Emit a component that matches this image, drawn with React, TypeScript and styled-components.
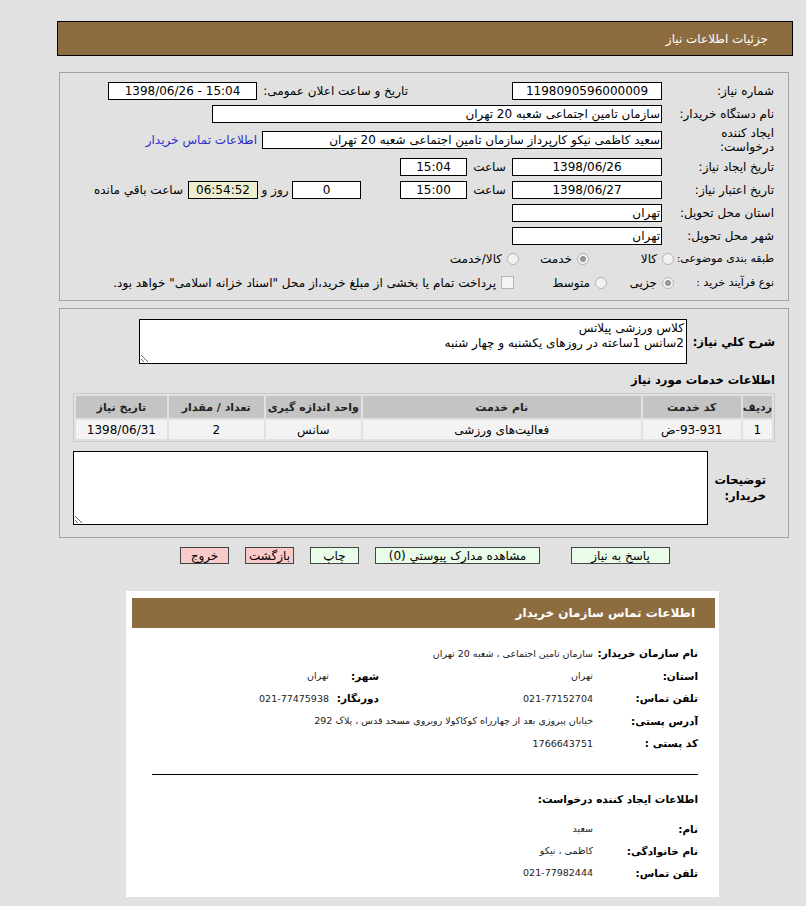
import React from 'react'
import styled, { createGlobalStyle } from 'styled-components'

const GlobalStyle = createGlobalStyle`
  html, body {
    margin: 0;
    padding: 0;
    background: #e1e1e1;
  }
  body {
    font-family: "DejaVu Sans", Tahoma, sans-serif;
    font-size: 12px;
    color: #000;
  }
`

const Page = styled.div`
  direction: rtl;
  width: 736px;
  margin-left: 57px;
  padding-top: 21px;
  padding-bottom: 10px;
`

const TitleBar = styled.div`
  height: 35px;
  box-sizing: border-box;
  border: 1px solid #000;
  background: #8d6c3f;
  color: #fff;
  display: flex;
  align-items: center;
  padding-right: 24px;
  font-size: 12px;
`

const Panel = styled.div<{ $top: number; $height: number }>`
  margin: ${p => p.$top}px 4px 0 2px;
  height: ${p => p.$height}px;
  box-sizing: border-box;
  border: 1px solid #a3a3a3;
`

const FormArea = styled.div`
  padding: 7px 14px 0 0;
`

const Row = styled.div<{ $h: number }>`
  display: flex;
  align-items: center;
  height: ${p => p.$h}px;
`

const Label = styled.div<{ $w?: number; $size?: number }>`
  width: ${p => p.$w ?? 112}px;
  flex-shrink: 0;
  white-space: nowrap;
  font-size: ${p => p.$size ?? 12}px;
  line-height: 14px;
`

const Field = styled.div<{ $w: number; $center?: boolean; $bg?: string }>`
  width: ${p => p.$w}px;
  height: 18px;
  box-sizing: border-box;
  flex-shrink: 0;
  border: 1px solid #000;
  background: ${p => p.$bg ?? '#fff'};
  display: flex;
  align-items: center;
  justify-content: ${p => (p.$center ? 'center' : 'flex-start')};
  padding: 0 1px;
  white-space: nowrap;
  overflow: hidden;
`

const Slot = styled.div<{ $w: number; $center?: boolean }>`
  width: ${p => p.$w}px;
  flex-shrink: 0;
  text-align: ${p => (p.$center ? 'center' : 'right')};
  white-space: nowrap;
`

const Gap = styled.div<{ $w: number }>`
  width: ${p => p.$w}px;
  flex-shrink: 0;
`

const Note = styled.div`
  margin-right: 5px;
  white-space: nowrap;
`

const BlueLink = styled.a`
  margin-right: 5px;
  color: #2f2fc8;
  text-decoration: none;
  white-space: nowrap;
`

const Option = styled.div<{ $w?: number }>`
  display: flex;
  align-items: center;
  gap: 5px;
  width: ${p => (p.$w ? `${p.$w}px` : 'auto')};
  flex-shrink: 0;
  white-space: nowrap;
`

const Radio = styled.span<{ $checked?: boolean }>`
  width: 12px;
  height: 12px;
  box-sizing: border-box;
  border-radius: 50%;
  border: 1px solid #b4b4b4;
  background: #f2f2f2;
  display: flex;
  align-items: center;
  justify-content: center;
  &::after {
    content: '';
    width: 4px;
    height: 4px;
    border-radius: 50%;
    border: 1px solid #8a8a8a;
    background: #9a9a9a;
    display: ${p => (p.$checked ? 'block' : 'none')};
  }
`

const Check = styled.span`
  width: 13px;
  height: 13px;
  box-sizing: border-box;
  border: 1px solid #b4b4b4;
  background: #f4f4f4;
`

const DescArea = styled.div`
  padding: 10px 13px 0 13px;
`

const DescRow = styled.div<{ $top?: number }>`
  display: flex;
  align-items: center;
  margin-top: ${p => p.$top ?? 0}px;
`

const BoldLabel = styled.div<{ $w: number; $pad?: number; $nowrap?: boolean }>`
  width: ${p => p.$w}px;
  box-sizing: border-box;
  padding-right: ${p => p.$pad ?? 0}px;
  flex-shrink: 0;
  font-weight: bold;
  font-size: 11.5px;
  line-height: 16px;
  white-space: ${p => (p.$nowrap ? 'nowrap' : 'normal')};
`

const TextBox = styled.textarea<{ $w: number; $h: number }>`
  width: ${p => p.$w}px;
  height: ${p => p.$h}px;
  box-sizing: border-box;
  border: 1px solid #000;
  background: #fff;
  font-family: inherit;
  font-size: 12px;
  line-height: 15px;
  padding: 1px 2px;
  margin: 0;
  overflow: hidden;
  direction: rtl;
  color: #000;
  outline: none;
`

const SectionTitle = styled.div`
  font-weight: bold;
  font-size: 11.5px;
  line-height: 16px;
  margin-top: 8px;
`

const ItemTable = styled.table`
  width: 100%;
  margin-top: 5px;
  border: 1px solid #c9c9c9;
  border-spacing: 2px;
  font-size: 12px;
`

const Th = styled.th<{ $w?: number }>`
  width: ${p => (p.$w ? `${p.$w}px` : 'auto')};
  height: 22px;
  padding: 0;
  background: #c4c4c4;
  font-weight: bold;
  font-size: 11px;
  color: #222;
  text-align: center;
`

const Td = styled.td`
  height: 19px;
  padding: 0 2px;
  background: #f3f3f3;
  text-align: center;
`

const Code = styled.span`
  unicode-bidi: bidi-override;
  direction: ltr;
`

const ButtonBar = styled.div`
  display: flex;
  justify-content: center;
  gap: 16px;
  margin-top: 9px;
`

const ActionButton = styled.button<{ $w: number; $tone: 'green' | 'red'; $extra?: number }>`
  width: ${p => p.$w}px;
  height: 17px;
  margin: 0 0 0 ${p => p.$extra ?? 0}px;
  padding: 0;
  box-sizing: border-box;
  border: 1px solid #444;
  background: ${p => (p.$tone === 'green' ? '#e8fce8' : '#f8caca')};
  font-family: inherit;
  font-size: 12px;
  line-height: 14px;
  color: #000;
  white-space: nowrap;
  overflow: visible;
`

const Card = styled.div`
  width: 593px;
  box-sizing: border-box;
  margin: 27px 74px 0 auto;
  padding: 7px 4px 13px 6px;
  background: #fff;
`

const CardHead = styled.div`
  height: 30px;
  background: #8d6c3f;
  color: #fff;
  font-weight: bold;
  font-size: 12px;
  display: flex;
  align-items: center;
  padding-right: 20px;
`

const CardBody = styled.div`
  padding: 14px 17px 0 0;
`

const InfoGrid = styled.div`
  display: grid;
  grid-template-columns: 105px 214px 50px 1fr;
  grid-auto-rows: 22.5px;
  align-items: center;
`

const InfoLabel = styled.div`
  font-weight: bold;
  font-size: 10.5px;
  white-space: nowrap;
`

const InfoValue = styled.div<{ $span?: number }>`
  grid-column: span ${p => p.$span ?? 1};
  font-size: 9.5px;
  color: #222;
  white-space: nowrap;
`

const Rule = styled.div`
  margin: 19px 0 0 20px;
  border-top: 1px solid #000;
`

const SubTitle = styled.div`
  margin-top: 17px;
  font-weight: bold;
  font-size: 10.5px;
  line-height: 14px;
`

const CreatorGrid = styled(InfoGrid)`
  margin-top: 12px;
  grid-auto-rows: 22px;
`

export default function App() {
  return (
    <>
      <GlobalStyle />
      <Page>
        <TitleBar>جزئیات اطلاعات نیاز</TitleBar>

        <Panel $top={16} $height={229}>
          <FormArea>
            <Row $h={22}>
              <Label>شماره نیاز:</Label>
              <Field $w={150} $center>1198090596000009</Field>
              <Gap $w={104} />
              <Slot $w={151}>تاریخ و ساعت اعلان عمومی:</Slot>
              <Field $w={149} $center dir="ltr">1398/06/26 - 15:04</Field>
            </Row>
            <Row $h={23}>
              <Label>نام دستگاه خریدار:</Label>
              <Field $w={450}>سازمان تامین اجتماعی شعبه 20 تهران</Field>
            </Row>
            <Row $h={30}>
              <Label>
                ایجاد کننده
                <br />
                درخواست:
              </Label>
              <Field $w={400}>سعید کاظمی نیکو کارپرداز سازمان تامین اجتماعی شعبه 20 تهران</Field>
              <BlueLink href="#">اطلاعات تماس خریدار</BlueLink>
            </Row>
            <Row $h={24}>
              <Label>تاریخ ایجاد نیاز:</Label>
              <Field $w={150} $center>1398/06/26</Field>
              <Slot $w={45} $center>ساعت</Slot>
              <Field $w={67} $center>15:04</Field>
            </Row>
            <Row $h={22}>
              <Label>تاریخ اعتبار نیاز:</Label>
              <Field $w={150} $center>1398/06/27</Field>
              <Slot $w={45} $center>ساعت</Slot>
              <Field $w={67} $center>15:00</Field>
              <Gap $w={39} />
              <Field $w={69} $center>0</Field>
              <Slot $w={34} $center>روز و</Slot>
              <Field $w={70} $center $bg="#efedcf">06:54:52</Field>
              <Note>ساعت باقي مانده</Note>
            </Row>
            <Row $h={23}>
              <Label>استان محل تحویل:</Label>
              <Field $w={150}>تهران</Field>
            </Row>
            <Row $h={23}>
              <Label>شهر محل تحویل:</Label>
              <Field $w={150}>تهران</Field>
            </Row>
            <Row $h={24}>
              <Label $w={100} $size={11}>طبقه بندی موضوعی:</Label>
              <Option $w={85}>
                <Radio />
                کالا
              </Option>
              <Option $w={70}>
                <Radio $checked />
                خدمت
              </Option>
              <Option>
                <Radio />
                کالا/خدمت
              </Option>
            </Row>
            <Row $h={23}>
              <Label $w={100} $size={11}>نوع فرآیند خرید :</Label>
              <Option $w={67}>
                <Radio $checked />
                جزیی
              </Option>
              <Option $w={93}>
                <Radio />
                متوسط
              </Option>
              <Option>
                <Check />
                پرداخت تمام یا بخشی از مبلغ خرید،از محل "اسناد خزانه اسلامی" خواهد بود.
              </Option>
            </Row>
          </FormArea>
        </Panel>

        <Panel $top={7} $height={230}>
          <DescArea>
            <DescRow>
              <BoldLabel $w={88} $nowrap>شرح کلي نیاز:</BoldLabel>
              <TextBox
                $w={548}
                $h={45}
                readOnly
                value={'کلاس ورزشی پیلاتس\n2سانس 1ساعته در روزهای یکشنبه و چهار شنبه'}
              />
            </DescRow>
            <SectionTitle>اطلاعات خدمات مورد نیاز</SectionTitle>
            <ItemTable>
              <thead>
                <tr>
                  <Th $w={26}>ردیف</Th>
                  <Th $w={98}>کد خدمت</Th>
                  <Th $w={278}>نام خدمت</Th>
                  <Th $w={95}>واحد اندازه گیری</Th>
                  <Th $w={95}>تعداد / مقدار</Th>
                  <Th>تاریخ نیاز</Th>
                </tr>
              </thead>
              <tbody>
                <tr>
                  <Td>1</Td>
                  <Td>
                    <Code>ض-93-931</Code>
                  </Td>
                  <Td>فعالیت‌های ورزشی</Td>
                  <Td>سانس</Td>
                  <Td>2</Td>
                  <Td>1398/06/31</Td>
                </tr>
              </tbody>
            </ItemTable>
            <DescRow $top={9}>
              <BoldLabel $w={67} $pad={9}>
                توضیحات
                <br />
                خریدار:
              </BoldLabel>
              <TextBox $w={635} $h={74} readOnly value="" />
            </DescRow>
          </DescArea>
        </Panel>

        <ButtonBar>
          <ActionButton $w={99} $tone="green" $extra={15}>پاسخ به نیاز</ActionButton>
          <ActionButton $w={165} $tone="green">مشاهده مدارک پیوستي (0)</ActionButton>
          <ActionButton $w={49} $tone="green">چاپ</ActionButton>
          <ActionButton $w={49} $tone="red">بازگشت</ActionButton>
          <ActionButton $w={49} $tone="red">خروج</ActionButton>
        </ButtonBar>

        <Card>
          <CardHead>اطلاعات تماس سازمان خریدار</CardHead>
          <CardBody>
            <InfoGrid>
              <InfoLabel>نام سازمان خریدار:</InfoLabel>
              <InfoValue $span={3}>سازمان تامین اجتماعی ، شعبه 20 تهران</InfoValue>

              <InfoLabel>استان:</InfoLabel>
              <InfoValue>تهران</InfoValue>
              <InfoLabel>شهر:</InfoLabel>
              <InfoValue>تهران</InfoValue>

              <InfoLabel>تلفن تماس:</InfoLabel>
              <InfoValue>021-77152704</InfoValue>
              <InfoLabel>دورنگار:</InfoLabel>
              <InfoValue>021-77475938</InfoValue>

              <InfoLabel>آدرس پستی:</InfoLabel>
              <InfoValue $span={3}>خیابان پیروزی بعد از چهارراه کوکاکولا روبروی مسجد قدس ، پلاک 292</InfoValue>

              <InfoLabel>کد پستی :</InfoLabel>
              <InfoValue $span={3}>1766643751</InfoValue>
            </InfoGrid>
            <Rule />
            <SubTitle>اطلاعات ایجاد کننده درخواست:</SubTitle>
            <CreatorGrid>
              <InfoLabel>نام:</InfoLabel>
              <InfoValue $span={3}>سعید</InfoValue>
              <InfoLabel>نام خانوادگی:</InfoLabel>
              <InfoValue $span={3}>کاظمی ، نیکو</InfoValue>
              <InfoLabel>تلفن تماس:</InfoLabel>
              <InfoValue $span={3}>021-77982444</InfoValue>
            </CreatorGrid>
          </CardBody>
        </Card>
      </Page>
    </>
  )
}
